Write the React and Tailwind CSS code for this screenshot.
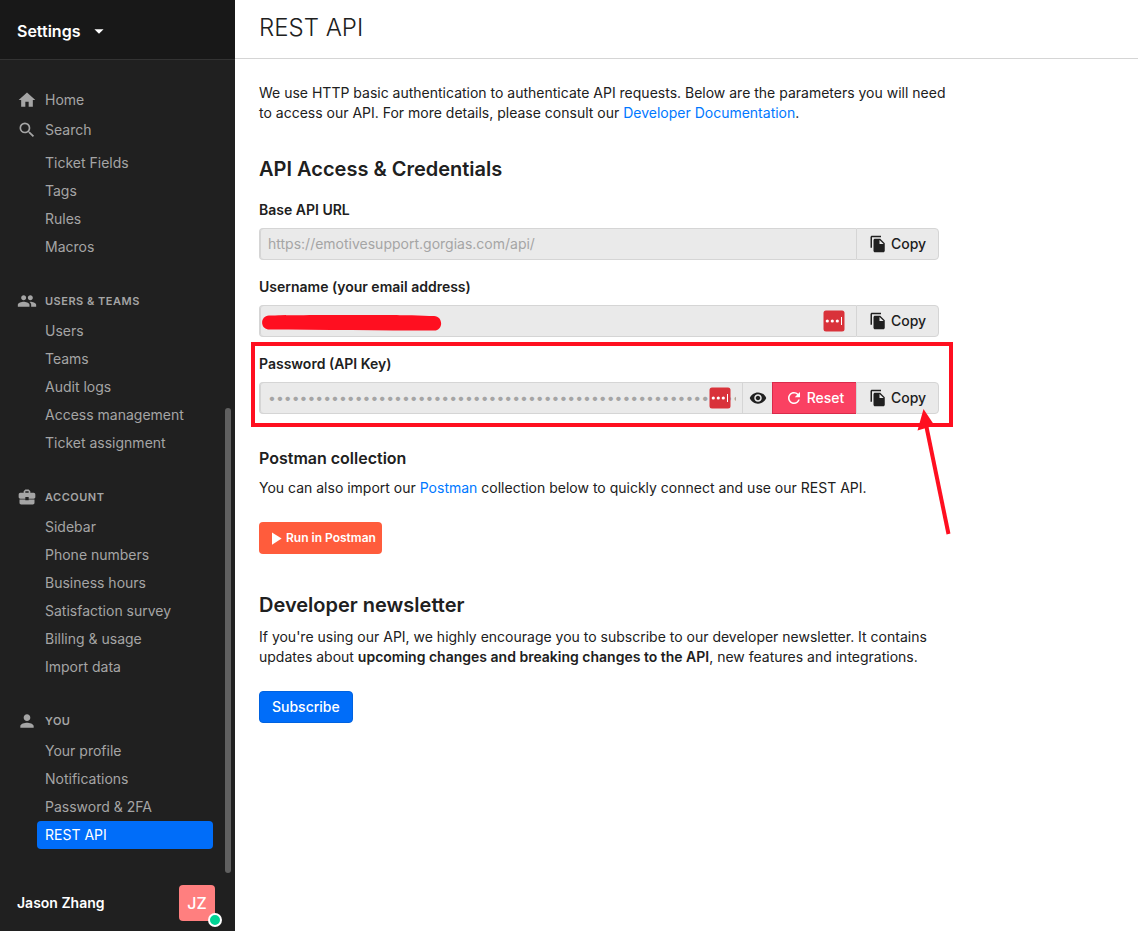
import React from "react";
import {
  MdHome,
  MdSearch,
  MdPeople,
  MdBusinessCenter,
  MdPerson,
  MdFileCopy,
  MdRemoveRedEye,
  MdRefresh,
  MdArrowDropDown,
  MdPlayArrow,
} from "react-icons/md";

const sections = [
  {
    title: "Users & Teams",
    Icon: MdPeople,
    items: ["Users", "Teams", "Audit logs", "Access management", "Ticket assignment"],
  },
  {
    title: "Account",
    Icon: MdBusinessCenter,
    items: [
      "Sidebar",
      "Phone numbers",
      "Business hours",
      "Satisfaction survey",
      "Billing & usage",
      "Import data",
    ],
  },
  {
    title: "You",
    Icon: MdPerson,
    items: ["Your profile", "Notifications", "Password & 2FA", "REST API"],
  },
];

function NavItem({ label, active }) {
  return (
    <li>
      <a
        href="#"
        aria-current={active ? "page" : undefined}
        className={
          "flex h-7 items-center rounded px-2 " +
          (active ? "bg-[#006df9] text-white" : "text-[#a5a5a5]")
        }
      >
        {label}
      </a>
    </li>
  );
}

function TopLink({ label, Icon }) {
  return (
    <a href="#" className="flex h-[30px] items-center gap-2 pl-[17px] text-[#a5a5a5]">
      <Icon size={20} />
      {label}
    </a>
  );
}

function Sidebar() {
  return (
    <aside className="flex w-[235px] shrink-0 flex-col bg-[#202020]">
      <div className="flex h-[60px] shrink-0 items-center border-b border-[#333] bg-[#181818] pt-0.5 pl-[17px]">
        <button type="button" className="flex items-center gap-2 text-base font-semibold text-white">
          Settings
          <MdArrowDropDown size={22} />
        </button>
      </div>
      <div className="relative grow">
        <nav className="pt-[25px] text-sm">
          <TopLink label="Home" Icon={MdHome} />
          <TopLink label="Search" Icon={MdSearch} />
          <ul className="mt-1 pr-[22px] pl-[37px]">
            {["Ticket Fields", "Tags", "Rules", "Macros"].map((label) => (
              <NavItem key={label} label={label} />
            ))}
          </ul>
          {sections.map(({ title, Icon, items }) => (
            <section key={title} className="mt-6">
              <h2 className="flex h-8 items-center gap-2 pl-[17px] text-[11px] leading-4 font-semibold tracking-[0.5px] text-[#a5a5a5] uppercase">
                <Icon size={20} />
                {title}
              </h2>
              <ul className="pr-[22px] pl-[37px]">
                {items.map((label) => (
                  <NavItem key={label} label={label} active={label === "REST API"} />
                ))}
              </ul>
            </section>
          ))}
        </nav>
        <div className="absolute right-1 bottom-0 h-[465px] w-1.5 rounded-full bg-[#606060]" />
      </div>
      <div className="flex h-[58px] shrink-0 items-center justify-between pt-0.5 pr-5 pl-[17px]">
        <span className="text-sm font-semibold text-white">Jason Zhang</span>
        <div className="relative flex size-9 items-center justify-center rounded-sm bg-[#ff7f7f] text-base font-medium text-white">
          JZ
          <span className="absolute -right-[7px] -bottom-1.5 size-3.5 rounded-full border-2 border-white bg-[#00d495]" />
        </div>
      </div>
    </aside>
  );
}

function CopyButton({ label }) {
  return (
    <button
      type="button"
      aria-label={label}
      className="flex w-[83px] shrink-0 items-center justify-center gap-1 rounded-r border border-[#d5d5d5] bg-[#eaeaea] font-medium"
    >
      <MdFileCopy size={18} />
      Copy
    </button>
  );
}

function AutofillBadge() {
  return (
    <svg viewBox="0 0 22 22" className="absolute top-[5px] right-[11px] size-[22px]">
      <rect x="0.5" y="0.5" width="21" height="21" rx="2.5" fill="#d9323a" />
      <g fill="#fff">
        <circle cx="4.3" cy="11" r="1.6" />
        <circle cx="9.3" cy="11" r="1.6" />
        <circle cx="14.3" cy="11" r="1.6" />
        <rect x="18" y="7" width="1" height="8" />
      </g>
    </svg>
  );
}

function Field({ id, label, type = "text", value, badge, overlay, actions, mark }) {
  return (
    <div className="relative">
      <label htmlFor={id} className="mb-2 block leading-[21px] font-semibold">
        {label}
      </label>
      <div className="flex h-8">
        <div className="relative min-w-0 grow">
          <input
            id={id}
            type={type}
            defaultValue={value}
            readOnly
            className="h-full w-full rounded-l border border-r-0 border-[#d5d5d5] bg-[#eaeaea] pr-1.5 pb-0.5 pl-2 text-[#a5a5a5] shadow-[inset_1px_0_0_#d5d5d5] placeholder:text-[#a5a5a5]"
          />
          {overlay}
          {badge && <AutofillBadge />}
        </div>
        {actions}
        <CopyButton label={"Copy " + label} />
      </div>
      {mark}
    </div>
  );
}

export default function App() {
  return (
    <div className="flex min-h-screen bg-white font-[Inter,sans-serif] text-sm text-[#202020]">
      <Sidebar />
      <div className="min-w-0 grow">
        <header className="flex h-[59px] items-center border-b border-[#d5d5d5] px-6 pb-0.5">
          <h1 className="text-2xl font-light">REST API</h1>
        </header>
        <main className="max-w-[748px] px-6 pt-6 pb-8">
          <p>
            We use HTTP basic authentication to authenticate API requests. Below are the parameters you will need
            to access our API. For more details, please consult our{" "}
            <a href="#" className="text-[#0078ff]">Developer Documentation</a>.
          </p>

          <h2 className="mt-[34px] text-xl leading-6 font-semibold">API Access &amp; Credentials</h2>
          <div className="mt-[18px] flex max-w-[680px] flex-col gap-4">
            <Field id="base-url" label="Base API URL" value="https://emotivesupport.gorgias.com/api/" />
            <Field
              id="username"
              label="Username (your email address)"
              value=""
              badge
              overlay={
                <svg viewBox="0 0 180 18" className="absolute top-[9px] left-[3px] h-[18px] w-[180px]">
                  <path
                    d="M7 1.5 C30 0.8 130 0.8 150 1.2 C158 1.6 166 2 172 2 C181 2 182 16.5 172 16.6 C120 16.6 60 15.8 6 15.5 C-2 14.5 -2 2 7 1.5Z"
                    fill="#ff0f20"
                  />
                </svg>
              }
            />
            <Field
              id="password"
              label="Password (API Key)"
              type="password"
              value="0123456789012345678901234567890123456789012345678901234567890123"
              badge
              actions={
                <>
                  <button
                    type="button"
                    aria-label="Show password"
                    className="flex w-[30px] shrink-0 items-center justify-center border border-r-0 border-[#d5d5d5] bg-[#eaeaea]"
                  >
                    <MdRemoveRedEye size={18} />
                  </button>
                  <button
                    type="button"
                    className="flex w-[84px] shrink-0 items-center justify-center gap-1 border border-r-0 border-[#d92b4b] bg-[#fa4162] font-medium text-white"
                  >
                    <MdRefresh size={18} />
                    Reset
                  </button>
                </>
              }
              mark={
                <>
                  <div className="pointer-events-none absolute -top-[11px] -right-3.5 -bottom-[13px] -left-2 border-4 border-[#ff0f20]" />
                  <svg
                    viewBox="0 0 34 126"
                    className="pointer-events-none absolute top-[56px] -right-3 h-[126px] w-[34px]"
                  >
                    <path d="M9.5 18 L31.5 125" stroke="#ff0f20" strokeWidth="4" />
                    <path d="M6.5 0 L17.5 16.5 L0.5 21.5Z" fill="#ff0f20" />
                  </svg>
                </>
              }
            />
          </div>

          <h3 className="mt-8 text-base leading-6 font-semibold">Postman collection</h3>
          <p className="mt-2">
            You can also import our <a href="#" className="text-[#0078ff]">Postman</a> collection below to quickly
            connect and use our REST API.
          </p>
          <button
            type="button"
            className="mt-6 flex h-8 items-center rounded bg-[#ff5c3c] pr-1.5 pl-1.5 text-xs font-semibold text-white"
          >
            <MdPlayArrow size={21} />
            Run in Postman
          </button>

          <h2 className="mt-[39px] text-xl leading-6 font-semibold">Developer newsletter</h2>
          <p className="mt-2.5">
            If you're using our API, we highly encourage you to subscribe to our developer newsletter. It contains
            updates about <strong className="font-semibold">upcoming changes and breaking changes to the API</strong>,
            new features and integrations.
          </p>
          <button type="button" className="mt-6 h-8 rounded border border-[#0062e0] bg-[#006df9] px-3 font-medium text-white">
            Subscribe
          </button>
        </main>
      </div>
    </div>
  );
}
